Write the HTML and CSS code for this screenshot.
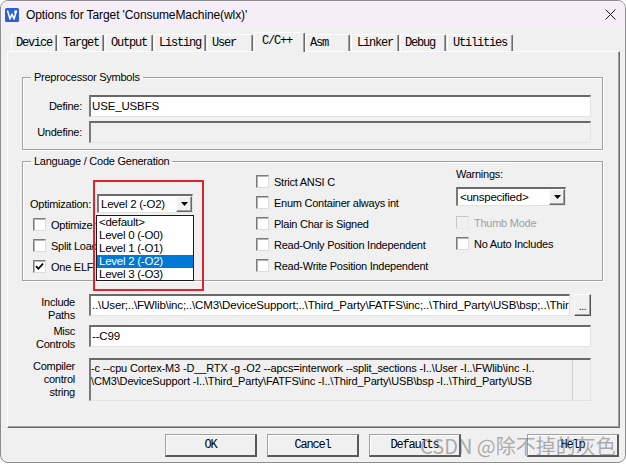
FILE: index.html
```html
<!DOCTYPE html>
<html>
<head>
<meta charset="utf-8">
<link rel="stylesheet" href="styles.css">
</head>
<body>
<div class="window">
  <div class="titlebar">
    <svg class="appicon" width="14" height="14" viewBox="0 0 14 14">
      <rect x="0" y="0" width="14" height="14" rx="1.5" fill="#2b5fd6"/>
      <path d="M2.5 2.5 L5 11 L7 6 L9 11 L11.5 2.5" fill="none" stroke="#fff" stroke-width="1.5" stroke-linejoin="round"/>
      <circle cx="10.5" cy="4" r="1.4" fill="#fff"/>
    </svg>
    <span class="title">Options for Target 'ConsumeMachine(wlx)'</span>
    <svg class="close" width="11" height="11" viewBox="0 0 11 11">
      <path d="M0.5 0.5 L10.5 10.5 M10.5 0.5 L0.5 10.5" stroke="#1a1a1a" stroke-width="1"/>
    </svg>
  </div>

  <div class="tabs">
    <span class="tab t46">Device</span>
    <span class="tab t46">Target</span>
    <span class="tab t48">Output</span>
    <span class="tab t52">Listing</span>
    <span class="tab t46">User</span>
    <span class="tab on t51">C/C++</span>
    <span class="tab t45">Asm</span>
    <span class="tab t48">Linker</span>
    <span class="tab t46">Debug</span>
    <span class="tab t66">Utilities</span>
  </div>

  <div class="panel">
    <fieldset class="group">
      <legend>Preprocessor Symbols</legend>
      <div class="pre">
        <span class="lbl">Define:</span>
        <div class="edit"><span class="etext">USE_USBFS</span></div>
        <span class="lbl">Undefine:</span>
        <div class="edit dis"></div>
      </div>
    </fieldset>

    <fieldset class="group lang">
      <legend>Language / Code Generation</legend>
      <div class="cols">
        <div class="col c1">
          <div class="row">
            <span class="optlbl">Optimization:</span>
            <div class="sel opt">
              <span class="sel-v">Level 2 (-O2)</span>
              <span class="sel-b"><svg width="7" height="4" viewBox="0 0 7 4"><path d="M0 0 H7 L3.5 4 Z" fill="#000"/></svg></span>
              <div class="redbox"></div>
              <ul class="droplist">
                <li>&lt;default&gt;</li>
                <li>Level 0 (-O0)</li>
                <li>Level 1 (-O1)</li>
                <li class="hl">Level 2 (-O2)</li>
                <li>Level 3 (-O3)</li>
              </ul>
            </div>
          </div>
          <div class="row cbrow clip"><span class="cb"></span>Optimize for Time</div>
          <div class="row cbrow clip"><span class="cb"></span>Split Load and Store Multiple</div>
          <div class="row cbrow clip"><span class="cb"><svg width="9" height="9" viewBox="0 0 9 9"><path d="M1 4.2 L3.4 6.8 L8 1.6" fill="none" stroke="#000" stroke-width="1.7"/></svg></span>One ELF Section per Function</div>
        </div>
        <div class="col c2">
          <div class="row cbrow"><span class="cb"></span>Strict ANSI C</div>
          <div class="row cbrow"><span class="cb"></span>Enum Container always int</div>
          <div class="row cbrow"><span class="cb"></span>Plain Char is Signed</div>
          <div class="row cbrow"><span class="cb"></span>Read-Only Position Independent</div>
          <div class="row cbrow"><span class="cb"></span>Read-Write Position Independent</div>
        </div>
        <div class="col c3">
          <div class="warnlbl">Warnings:</div>
          <div class="sel warn">
            <span class="sel-v">&lt;unspecified&gt;</span>
            <span class="sel-b"><svg width="7" height="4" viewBox="0 0 7 4"><path d="M0 0 H7 L3.5 4 Z" fill="#000"/></svg></span>
          </div>
          <div class="row cbrow disabled"><span class="cb"></span>Thumb Mode</div>
          <div class="row cbrow"><span class="cb"></span>No Auto Includes</div>
        </div>
      </div>
    </fieldset>

    <div class="fields">
      <span class="lbl2 l-inc">Include<br>Paths</span>
      <div class="incrow">
        <div class="edit grow"><span class="etext">..\User;..\FWlib\inc;..\CM3\DeviceSupport;..\Third_Party\FATFS\inc;..\Third_Party\USB\bsp;..\Third_Party\USB\core;..\Third_Party\USB\class</span></div>
        <span class="dots">...</span>
      </div>
      <span class="lbl2 l-misc">Misc<br>Controls</span>
      <div class="edit"><span class="etext">--C99</span></div>
      <span class="lbl2 l-cc">Compiler<br>control<br>string</span>
      <div class="cstring">
        <div class="ctext">
          <div>-c --cpu Cortex-M3 -D__RTX -g -O2 --apcs=interwork --split_sections -I..\User -I..\FWlib\inc -I..</div>
          <div>\CM3\DeviceSupport -I..\Third_Party\FATFS\inc -I..\Third_Party\USB\bsp -I..\Third_Party\USB</div>
        </div>
        <span class="vscroll"></span>
      </div>
    </div>
  </div>

  <div class="buttons">
    <span class="btn">OK</span>
    <span class="btn">Cancel</span>
    <span class="btn">Defaults</span>
    <span class="btn help">Help</span>
  </div>

  <div class="watermark">CSDN @除不掉的灰色</div>
</div>
</body>
</html>
```

FILE: styles.css
```css
* { box-sizing: border-box; }
html, body { margin: 0; padding: 0; background: #ffffff; }
body {
  width: 626px; height: 465px; overflow: hidden;
  font-family: "Liberation Sans", Arial, sans-serif;
  font-size: 11px; letter-spacing: -0.25px; color: #000;
}
.window {
  position: relative;
  width: 626px; height: 463px;
  border: 1px solid #8e8e8e; border-radius: 8px;
  background: #f0f0f0; overflow: hidden;
  display: flex; flex-direction: column;
}
.titlebar {
  height: 27px; flex: none; background: #f5eef6;
  display: flex; align-items: center; padding-left: 4px;
}
.appicon { flex: none; margin-top: 1px; }
.title { margin-left: 7px; font-size: 12px; letter-spacing: -0.1px; color: #000; }
.close { margin-left: auto; margin-right: 9px; }

.tabs {
  height: 23px; flex: none; display: flex; align-items: flex-end;
  padding-left: 10px; gap: 1px;
  font-family: "Liberation Mono", "Courier New", monospace;
  font-size: 12px; letter-spacing: -1.2px;
}
.tab {
  flex: none; height: 17px; padding: 0 0 0 4px;
  border-top: 1px solid #fff; border-left: 1px solid #fff; border-right: 1px solid #696969;
  box-shadow: inset -1px 0 #a0a0a0;
  border-radius: 2px 2px 0 0; line-height: 16px; white-space: nowrap; overflow: hidden;
}
.t45 { width: 45px; }
.t46 { width: 46px; }
.t48 { width: 48px; padding-left: 5px; }
.t51 { width: 51px; }
.t52 { width: 52px; }
.t66 { width: 66px; padding-left: 5px; }
.tab.on {
  height: 20px; padding-left: 7px; line-height: 17px;
  margin-bottom: -1px; margin-right: -1px;
  position: relative; z-index: 1; background: #f0f0f0;
}

.panel {
  flex: none; height: 377px; margin: 0 5px 0 6px;
  border: 1px solid; border-color: #fff #696969 #696969 #fff;
  box-shadow: inset -1px -1px #a0a0a0;
  padding: 19px 16px 0 14px;
}
.group {
  margin: 0; padding: 0; min-width: 0;
  border: 1px solid #a0a0a0;
  box-shadow: inset 1px 1px #fff, 1px 1px #fff;
}
.group legend { padding: 0 3px; margin-left: 8px; line-height: 13px; }
.pre {
  display: grid; grid-template-columns: 59px minmax(0, 1fr); column-gap: 7px; row-gap: 4px;
  align-items: center; padding: 11px 11px 6px 0;
}
.lbl { text-align: right; }
.edit {
  height: 22px; background: #fff; overflow: hidden; white-space: nowrap;
  border-style: solid; border-width: 2px 1px 1px 2px;
  border-color: #6a6a6a #e3e3e3 #e3e3e3 #7a7a7a;
  line-height: 18px; padding-left: 1px;
}
.edit.dis { background: #f0f0f0; }
.etext { font-size: 11.5px; letter-spacing: -0.15px; }

.lang { margin-top: 5px; }
.cols {
  display: grid; grid-template-columns: 226px 200px minmax(0, 1fr);
  padding: 0 0 3px 7px; align-items: start;
}
.col { display: flex; flex-direction: column; }
.c1 { padding-top: 25px; }
.c2 { padding-top: 3px; }
.row { height: 21px; display: flex; align-items: center; white-space: nowrap; }
.cbrow .cb { margin-right: 5px; }
.c1 .cbrow { padding-left: 3px; }
.clip { width: 162px; overflow: hidden; }
.cb {
  flex: none; width: 13px; height: 13px; background: #fff;
  border: 1px solid; border-color: #7a7a7a #dcdcdc #dcdcdc #7a7a7a;
  box-shadow: inset 1px 1px #b4b4b4;
  display: flex; align-items: center; justify-content: center;
}
.disabled { color: #a0a0a0; }
.disabled .cb { background: #f0f0f0; border-color: #c8c8c8 #e8e8e8 #e8e8e8 #c8c8c8; box-shadow: none; }

.optlbl { width: 67px; flex: none; }
.sel {
  position: relative; display: flex; height: 19px; background: #fff;
  border-style: solid; border-width: 2px 1px 1px 2px;
  border-color: #6a6a6a #e3e3e3 #e3e3e3 #7a7a7a;
}
.sel.opt { width: 96px; }
.sel.warn { width: 110px; margin-top: 6px; margin-bottom: 6px; }
.sel-v { flex: 1; line-height: 16px; padding-left: 2px; font-size: 11.5px; overflow: hidden; white-space: nowrap; }
.sel-b {
  width: 16px; height: 16px; flex: none; background: #f0f0f0;
  border: 1px solid; border-color: #fff #696969 #696969 #fff;
  box-shadow: inset -1px -1px #a0a0a0;
  display: flex; align-items: center; justify-content: center;
}
.warnlbl { line-height: 13px; }

.droplist {
  position: absolute; left: -3px; top: 19px; z-index: 5;
  width: 98px; height: 66px; margin: 0; padding: 0; list-style: none;
  background: #fff; border: 1px solid #1a1a1a;
  font-size: 11.5px;
}
.droplist li { height: 13px; line-height: 13px; padding-left: 2px; white-space: nowrap; }
.droplist li.hl { background: #0078d7; color: #fff; }
.redbox {
  position: absolute; left: -6px; top: -16px; z-index: 6;
  width: 111px; height: 111px; border: 2px solid #e3232c; pointer-events: none;
}

.fields {
  display: grid; grid-template-columns: 53px minmax(0, 1fr);
  grid-template-rows: 22px 22px 45px;
  column-gap: 14px; row-gap: 9px;
  margin: 13px 12px 0 0;
}
.lbl2 { text-align: right; line-height: 13px; align-self: start; }
.l-inc { margin-top: 2px; }
.l-misc { margin-top: 0; }
.l-cc { margin-top: 4px; }
.incrow { display: flex; gap: 4px; min-width: 0; }
.grow { flex: 1; min-width: 0; }
.dots {
  width: 17px; height: 22px; flex: none; text-align: center;
  border: 1px solid; border-color: #fff #505050 #505050 #fff;
  box-shadow: inset -1px -1px #a0a0a0;
  line-height: 24px; font-size: 10px;
}
.cstring {
  height: 43px; margin-top: 2px; display: flex; background: #f0f0f0; min-width: 0;
  border-style: solid; border-width: 2px 1px 1px 2px;
  border-color: #6a6a6a #e3e3e3 #e3e3e3 #7a7a7a;
}
.ctext { flex: 1; min-width: 0; padding: 2px 0 0 0; line-height: 13px; font-size: 11px; letter-spacing: -0.15px; white-space: nowrap; overflow: hidden; }
.vscroll { width: 18px; flex: none; border-left: 1px solid #d4d4d4; }

.buttons {
  flex: none; display: flex; gap: 10px; margin-top: 6px;
  padding: 0 6px 0 164px;
  font-family: "Liberation Mono", "Courier New", monospace;
  font-size: 12px; letter-spacing: -1.2px;
}
.btn {
  width: 92px; height: 23px; text-align: center; line-height: 20px;
  border-style: solid; border-width: 1px 2px 2px 1px;
  border-color: #a0a0a0 #5a5a5a #5a5a5a #a0a0a0;
  box-shadow: inset 1px 1px #fff;
}
.btn.help { margin-left: auto; }

.watermark {
  position: absolute; left: 419px; top: 430px; z-index: 9;
  font-family: "Noto Sans CJK SC", "Noto Sans", sans-serif;
  font-size: 20px; letter-spacing: 0; color: rgba(110, 110, 110, 0.55);
  white-space: nowrap;
}
```
